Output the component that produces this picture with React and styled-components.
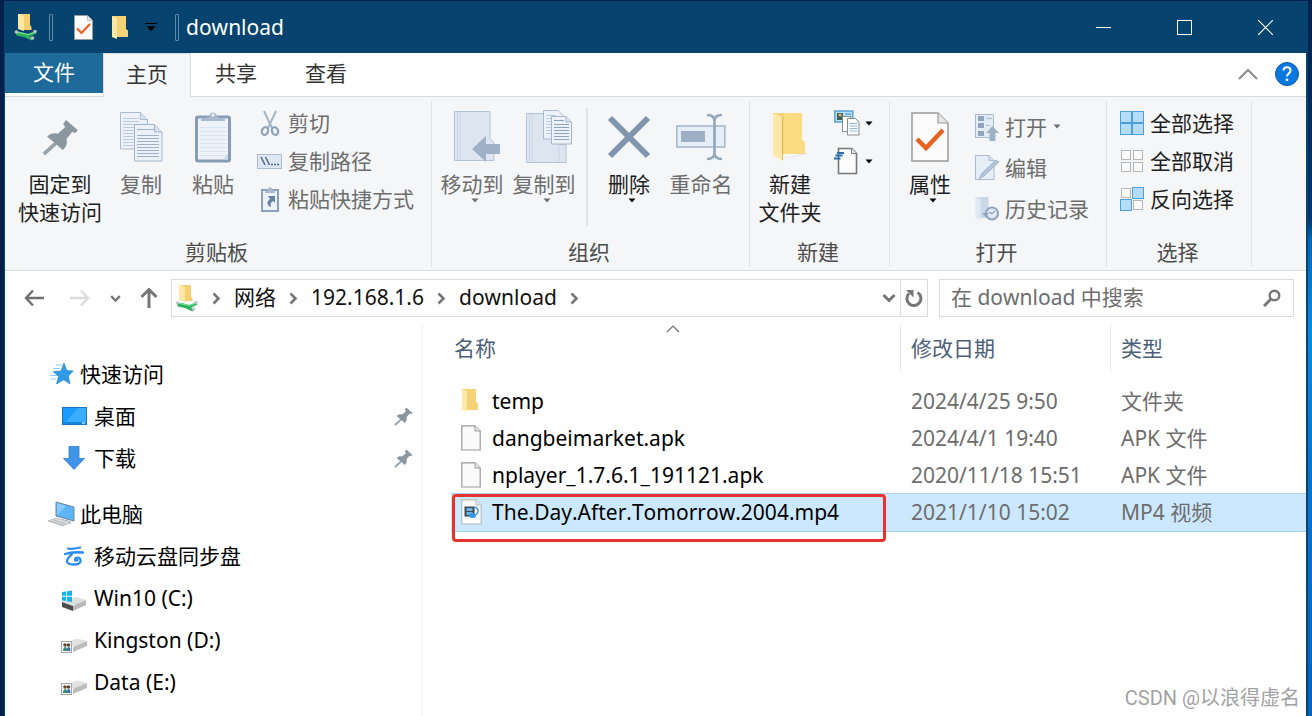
import styled, { createGlobalStyle, css } from 'styled-components'

const GlobalStyle = createGlobalStyle`
    * {
        box-sizing: border-box;
    }
    body {
        margin: 0;
        font-family: "Noto Sans", "Noto Sans CJK SC", sans-serif;
        font-size: 21px;
        font-kerning: none;
        line-height: 28px;
        color: #111;
    }
    button, input, table {
        font: inherit;
        font-kerning: inherit;
        color: inherit;
    }
    button {
        border: none;
        background: none;
        padding: 0;
        cursor: pointer;
    }
    svg {
        display: block;
        flex: none;
    }
`

const Desktop = styled.div`
    height: 100vh;
    padding: 1px 4px 0;
    display: flex;
    overflow: hidden;
    position: relative;
    background: linear-gradient(to right, #02204a 50%, transparent 50%),
        linear-gradient(to bottom, #02204a 0, #02366f 220px, #0a67b5 240px, #0a8be0 330px, #0a73cf 480px, #0863bd 100%);
`

const Window = styled.div`
    flex: 1;
    min-width: 0;
    display: flex;
    flex-direction: column;
    background: white;
    border-left: 1px solid #06446f;
    border-right: 2px solid #06446f;
`

/* title bar */

const TitleBar = styled.header`
    height: 52px;
    display: flex;
    align-items: center;
    padding-left: 9px;
    background: #06446f;
    color: white;
`

const TitleSeparator = styled.span`
    width: 4px;
    height: 27px;
    border: 1px solid #5d88a8;
    border-radius: 1px;
`

const QuickButton = styled.button`
    width: ${props => props.$width || 38}px;
    height: 36px;
    display: flex;
    align-items: center;
    justify-content: center;
`

const Title = styled.h1`
    flex: 1;
    margin: 0 0 0 7px;
    font-size: 21px;
    font-weight: normal;
    line-height: 28px;
`

const WindowButton = styled.button`
    width: 81px;
    height: 52px;
    display: flex;
    align-items: center;
    justify-content: center;
`

/* tabs */

const Tabs = styled.nav`
    height: 44px;
    display: flex;
    border-bottom: 1px solid #dadbdc;
`

const FileTab = styled.button`
    width: 98px;
    height: 40px;
    padding-bottom: 2px;
    background: #1d6a9b;
    color: white;
`

const Tab = styled.button`
    width: ${props => props.$active ? 88 : 90}px;
    height: 44px;
    padding-bottom: 4px;
    color: #333;
    ${props => props.$active && css`
        background: #f5f6f7;
        border: 1px solid #dadbdc;
        border-width: 1px 1px 0;
    `}
`

const TabTools = styled.div`
    flex: 1;
    display: flex;
    align-items: center;
    justify-content: flex-end;
    gap: 16px;
    padding: 0 6px 2px 0;
`

/* ribbon */

const Ribbon = styled.section`
    display: flex;
    padding: 4px 0 3px;
    background: #f5f6f7;
    border-bottom: 1px solid #dadbdc;
`

const Group = styled.div`
    display: flex;
    flex-direction: column;
    padding: 3px 0 1px;
    border-right: 1px solid #e2e3e4;
`

const GroupBody = styled.div`
    height: 134px;
    display: flex;
    align-items: flex-start;
    padding: 0 ${props => props.$right || 4}px 0 ${props => props.$left || 4}px;
`

const GroupLabel = styled.div`
    padding-right: 3px;
    text-align: center;
    color: #4c4c4c;
`

const BigButton = styled.button`
    width: ${props => props.$wide ? 90 : 72}px;
    padding-top: 5px;
    display: flex;
    flex-direction: column;
    align-items: center;
    white-space: nowrap;
    color: ${props => props.$disabled ? '#6d6d6d' : '#1e1e1e'};
`

const BigIcon = styled.span`
    height: 56px;
    margin-bottom: 5px;
    display: flex;
    align-items: center;
`

const BigCaret = styled.span`
    padding-left: 6px;
`

const Divider = styled.span`
    width: 2px;
    height: 118px;
    margin: 4px 5px 0 6px;
    background: #e2e3e4;
`

const Column = styled.div`
    display: flex;
    flex-direction: column;
    padding: ${props => props.$top || 0}px 0 0 8px;
`

const SmallButton = styled.button`
    height: ${props => props.$tall ? 41 : 38}px;
    display: flex;
    align-items: center;
    gap: 6px;
    white-space: nowrap;
    color: ${props => props.$disabled ? '#6d6d6d' : '#1e1e1e'};
`

const SmallIcon = styled.span`
    width: 25px;
    display: flex;
    justify-content: center;
`

/* address bar */

const AddressRow = styled.div`
    display: flex;
    align-items: center;
    padding: 8px 12px 8px 6px;
`

const NavButton = styled.button`
    width: ${props => props.$width || 46}px;
    height: 38px;
    display: flex;
    align-items: center;
    justify-content: center;
`

const AddressBox = styled.div`
    flex: 1;
    height: 38px;
    display: flex;
    align-items: center;
    padding-left: 3px;
    border: 1px solid #d9d9d9;
    margin-right: 11px;
`

const Crumb = styled.button`
    padding-bottom: 2px;
    white-space: nowrap;
`

const CrumbArrow = styled.button`
    width: 35px;
    display: flex;
    justify-content: center;
`

const Spacer = styled.span`
    flex: 1;
`

const RefreshButton = styled.button`
    width: 27px;
    height: 36px;
    display: flex;
    align-items: center;
    justify-content: center;
    border-left: 1px solid #d9d9d9;
`

const SearchBox = styled.label`
    width: 355px;
    height: 38px;
    display: flex;
    align-items: center;
    padding: 0 12px 0 11px;
    border: 1px solid #d9d9d9;
`

const SearchInput = styled.input`
    flex: 1;
    min-width: 0;
    padding: 0 0 2px;
    border: none;
    outline: none;
    background: none;
    &::placeholder {
        color: #6d6d6d;
        opacity: 1;
    }
`

/* body */

const Body = styled.div`
    flex: 1;
    min-height: 0;
    display: flex;
`

const Sidebar = styled.aside`
    width: 418px;
    padding-top: 28px;
    border-right: 2px solid #f5f5f5;
    overflow: hidden;
`

const TreeList = styled.ul`
    list-style: none;
    margin: 0 0 14px;
    padding: 0;
`

const TreeItem = styled.li`
    height: 42px;
    display: flex;
    align-items: center;
    padding: 0 8px 0 ${props => props.$child ? 55 : 43}px;
`

const TreeLink = styled.a`
    flex: 1;
    display: flex;
    align-items: center;
    gap: ${props => props.$child ? 6 : 4}px;
    color: #000;
    text-decoration: none;
`

const TreeIcon = styled.span`
    width: 28px;
    display: flex;
    justify-content: center;
`

const Content = styled.main`
    flex: 1;
    min-width: 0;
    padding-left: 28px;
`

const FileTable = styled.table`
    width: 100%;
    border-collapse: separate;
    border-spacing: 0;
    table-layout: fixed;
    text-align: left;
    tbody::before {
        content: "";
        display: block;
        height: 11px;
    }
`

const HeadCell = styled.th`
    position: relative;
    height: 46px;
    width: ${props => props.$width ? props.$width + 'px' : 'auto'};
    padding: 0 0 0 ${props => props.$first ? 3 : 10}px;
    font-weight: normal;
    color: #4c607a;
    border-right: ${props => props.$last ? 'none' : '1px solid #e5e5e5'};
`

const SortMark = styled.span`
    position: absolute;
    top: 0;
    left: 50%;
    margin-left: -10px;
`

const Row = styled.tr`
    td {
        height: 37px;
        padding: 0 0 0 10px;
        white-space: nowrap;
        color: #6d6d6d;
        ${props => props.$selected && css`
            height: 39px;
            padding-bottom: 2px;
            background: #cce8ff;
            border-top: 1px solid #a6d3ef;
            border-bottom: 1px solid #a6d3ef;
        `}
    }
`

const FileName = styled.div`
    position: relative;
    display: flex;
    align-items: center;
    gap: 10px;
    color: #000;
`

const FileIcon = styled.span`
    width: 21px;
    display: flex;
`

const Highlight = styled.span`
    position: absolute;
    top: -4px;
    left: -9px;
    right: 15px;
    height: 48px;
    border: 3px solid #e8322d;
    border-radius: 4px;
`

const Watermark = styled.span`
    position: absolute;
    right: 12px;
    bottom: 4px;
    font-family: Roboto, "Noto Sans CJK SC", sans-serif;
    font-size: 20px;
    color: #a2a2a2;
`

/* icons */

const Caret = ({ color = '#000' }) => (
    <svg width="8" height="5" viewBox="0 0 8 5">
        <path d="M0.5 0.5h7L4 4.5z" fill={color} />
    </svg>
)

const ArrowRight = () => (
    <svg width="9" height="13" viewBox="0 0 9 13">
        <path d="M1.5 1.5l5 5-5 5" fill="none" stroke="#767676" strokeWidth="2.6" />
    </svg>
)

const ChevronDown = ({ size = 14, width = 3 }) => (
    <svg width={size} height={size} viewBox="0 0 14 14">
        <path d="M1.5 4l5.5 5.5L12.5 4" fill="none" stroke="#767676" strokeWidth={width} />
    </svg>
)

const ShareFolder = () => (
    <svg width="24" height="28" viewBox="0 0 24 28">
        <path d="M4 1h12v11l1.500 2v3H6z" fill="#f5cf70" />
        <path d="M4 1h3l3 2v15l-6-2z" fill="#ffe8a6" />
        <path d="M2 18.500l5 .5 7 2 7-2.500 1.500 2-6.500 3 3 2-1.500 2-7.500-3.500-7.500-1.500z" fill="#2fb25c" />
        <path d="M3 19l11 2.500 6-2" fill="none" stroke="#7fe39c" strokeWidth="1.200" />
        <circle cx="2.500" cy="19" r="1.800" fill="#b9c5c8" />
        <circle cx="21" cy="18.500" r="1.800" fill="#b9c5c8" />
        <circle cx="18.500" cy="25" r="1.800" fill="#b9c5c8" />
    </svg>
)

const Folder = () => (
    <svg width="18" height="25" viewBox="0 0 18 25">
        <path d="M1 1h14v13l2 1.500V22H5z" fill="#f6d276" />
        <path d="M1 1l5 2.500V24l-5-2z" fill="#ffe8a8" />
    </svg>
)

const NewFolder = () => (
    <svg width="40" height="52" viewBox="0 0 40 52">
        <path d="M34 42h4l-22 6z" fill="#d9d9d9" />
        <path d="M3 2h29v27l3 2v12H12L3 44z" fill="#f7d372" />
        <path d="M14 2h18v27l3 2v12H14z" fill="#fbdc83" />
        <path d="M3 2l10 4v44L3 44z" fill="#ffe8a8" />
        <path d="M12.500 6v43" stroke="#e3b955" />
    </svg>
)

const CheckDoc = ({ w = 38, h = 50 }) => (
    <svg width={w} height={h} viewBox="0 0 38 50">
        <path d="M1 1h26l10 10v38H1z" fill="#fbfbfb" stroke="#9b9b9b" strokeWidth="1.500" />
        <path d="M27 1v10h10" fill="#e6e6e6" stroke="#9b9b9b" strokeWidth="1.200" />
        <path d="M6 27l9 9L32 18" fill="none" stroke="#e8611f" strokeWidth="4.500" />
    </svg>
)

const Pin = ({ size = 40 }) => (
    <svg width={size} height={size} viewBox="0 0 40 40">
        <path d="M26 1l12.500 11-2 3-4-1-6 7.500c1 4.500 0 8.500-4 12L5.500 19c3-3.500 8-4.500 11.500-3L25 9l-2-4z" fill="#8b979f" />
        <path d="M15 26L2 38" stroke="#98a3aa" strokeWidth="4" />
    </svg>
)

const lines = (x, w, from, to, step) => {
    let d = ''
    for (let y = from; y <= to; y += step) d += `M${x} ${y}h${w}`
    return d
}

const CopyIcon = () => (
    <svg width="43" height="50" viewBox="0 0 43 50">
        <path d="M.5.500h20l7 7V37H.5z" fill="#edf2fa" stroke="#a9bccf" />
        <path d="M20.500.500v7h7" fill="#d7e2f0" stroke="#a9bccf" />
        <path d={lines(3, 16, 6.5, 34, 3)} stroke="#bccadb" />
        <path d="M14.500 12.500h20l7.500 7.500v29H14.500z" fill="#edf2fa" stroke="#a2b6cb" />
        <path d="M34.500 12.500V20H42" fill="#d7e2f0" stroke="#a2b6cb" />
        <path d={lines(17, 17, 17.5, 20, 3) + lines(17, 22, 23.5, 46, 3)} stroke="#9fb1c6" />
    </svg>
)

const PasteIcon = () => (
    <svg width="36" height="52" viewBox="0 0 36 52">
        <rect x="1.500" y="6" width="33" height="44" rx="1.500" fill="#eef3fa" stroke="#879db5" strokeWidth="3" />
        <path d="M28 48.500l5-6v6z" fill="#cbd8e8" />
        <path d="M6 10V8l8-2c0-6 8-6 8 0l8 2v2z" fill="#a9bacc" />
        <circle cx="18" cy="4" r="1.500" fill="#f5f6f7" />
        <path d={lines(5, 26, 16.5, 45, 4)} stroke="#d8e1ed" />
    </svg>
)

const CutIcon = () => (
    <svg width="20" height="28" viewBox="0 0 20 28">
        <path d="M4 2l8 17M16 2L8 19" stroke="#a6b5c5" strokeWidth="2" />
        <ellipse cx="5" cy="22" rx="3" ry="4" fill="none" stroke="#8ba2ba" strokeWidth="2.200" transform="rotate(20 5 22)" />
        <ellipse cx="15" cy="22" rx="3" ry="4" fill="none" stroke="#8ba2ba" strokeWidth="2.200" transform="rotate(-20 15 22)" />
    </svg>
)

const PathIcon = () => (
    <svg width="25" height="15" viewBox="0 0 25 15">
        <rect x=".5" y=".5" width="24" height="14" fill="#dde7f3" stroke="#aabdd2" />
        <path d="M4 3l4 8M8.500 3l4 8" stroke="#536a85" strokeWidth="1.500" />
        <path d="M14 10.500h2M17 10.500h2M20 10.500h2" stroke="#536a85" strokeWidth="1.500" />
    </svg>
)

const ShortcutIcon = () => (
    <svg width="18" height="26" viewBox="0 0 18 26">
        <rect x="1" y="4" width="16" height="21" fill="#edf3fa" stroke="#8ba2ba" strokeWidth="2" />
        <path d="M4 5.500l3-2c0-3 4-3 4 0l3 2v1.500H4z" fill="#a9bacc" />
        <path d="M7 10h7v7l-2-2c-2 1-3 3-2 6-4-1-5-5-1-8z" fill="#6684a5" />
    </svg>
)

const MoveToIcon = () => (
    <svg width="55" height="52" viewBox="-9 0 55 52">
        <path d="M.5.500H36v27l4 4v18H.5z" fill="#dde5f0" stroke="#b4c4d6" />
        <path d="M3.500 1v48M6 1v48" stroke="#ccd8e6" />
        <path d="M18 38l14-13v8h14v10H32v8z" fill="#9fb1c6" />
    </svg>
)

const CopyToIcon = () => (
    <svg width="55" height="54" viewBox="-9 0 55 54">
        <path d="M.5 3.500H34v31h6v18H.5z" fill="#dde5f0" stroke="#b4c4d6" />
        <path d="M3.500 4v48M6 4v48M33 34v18" stroke="#ccd8e6" />
        <path d="M17.500.500H32l6 6V29H17.500z" fill="#edf2fa" stroke="#a9bccf" />
        <path d={lines(20, 10, 5.5, 26, 3)} stroke="#bccadb" />
        <path d="M25.500 6.500H40l5.500 5.500v22h-20z" fill="#edf2fa" stroke="#a2b6cb" />
        <path d="M40 6.500V12h5.500" fill="#d7e2f0" stroke="#a2b6cb" />
        <path d={lines(28, 10, 10.5, 12, 3) + lines(28, 15, 14.5, 31, 3)} stroke="#8ea4bc" />
    </svg>
)

const DeleteIcon = () => (
    <svg width="44" height="44" viewBox="0 0 44 44">
        <path d="M3 3l38 38M41 3L3 41" stroke="#8096ae" strokeWidth="6" />
    </svg>
)

const RenameIcon = () => (
    <svg width="50" height="48" viewBox="0 0 50 48">
        <rect x=".8" y="13" width="48" height="21" fill="#e6eef8" stroke="#a7bad0" strokeWidth="1.600" />
        <rect x="5" y="18" width="24" height="11" fill="#9db0c6" />
        <path d="M31 2c5 0 7.500 2 7.500 6v32c0 4-2.500 6-7.500 6M46 2c-5 0-7.500 2-7.500 6M46 46c-5 0-7.500-2-7.500-6" fill="none" stroke="#92a6bc" strokeWidth="2.600" />
    </svg>
)

const NewItemIcon = () => (
    <svg width="26" height="26" viewBox="0 0 26 26">
        <rect x=".8" y="1" width="18" height="11" fill="#b9e0f6" stroke="#58a4d4" strokeWidth="1.500" />
        <rect x="3" y="3" width="6" height="7" fill="#39624f" />
        <circle cx="6" cy="5" r="1.500" fill="#e6b48a" />
        <path d="M11 4h6M11 6.500h6" stroke="#3b85b8" />
        <path d="M8.500 6.500h7l3 3v12h-10z" fill="#fff" stroke="#8b8b8b" />
        <path d="M13.500 8.500h8l3.500 3.500v13H13.500z" fill="#fff" stroke="#8b8b8b" />
        <path d={lines(15.5, 8, 13.5, 23, 2.5)} stroke="#8fb4dc" />
    </svg>
)

const EasyAccessIcon = () => (
    <svg width="26" height="28" viewBox="0 0 26 28">
        <path d="M4.500 1.500h13l5 5v20h-18z" fill="#fdfdfd" stroke="#777" strokeWidth="1.600" />
        <path d="M17.500 1.500v5h5" fill="#eee" stroke="#777" />
        <path d="M3 6h7M1.500 8.500h7M0 11.500h6.500" stroke="#2b6fae" strokeWidth="1.800" />
    </svg>
)

const OpenIcon = () => (
    <svg width="24" height="28" viewBox="0 0 24 28">
        <rect x=".5" y="1.500" width="18" height="23" fill="#e3ebf5" stroke="#a9bccf" />
        <path d="M3 3h6v5H3zM3 10h6v5H3zM3 18h6v5H3z" fill="#8fa5bd" />
        <path d="M11 5.500h6M11 12.500h4" stroke="#a9bccf" />
        <path d="M17.500 13l6.500 7h-3.500v8h-6v-8H11z" fill="#9fb1c6" />
    </svg>
)

const EditIcon = () => (
    <svg width="24" height="26" viewBox="0 0 24 26">
        <path d="M.5.500H14l5 5v19H.5z" fill="#e6eef8" stroke="#a9bccf" />
        <path d="M14 .5v5h5" fill="#d0dcea" stroke="#a9bccf" />
        <path d="M4 24l3-6L21 5l3 2L9 21z" fill="#b3c4d8" stroke="#8fa5bd" strokeWidth=".6" />
    </svg>
)

const HistoryIcon = () => (
    <svg width="24" height="26" viewBox="0 0 24 26">
        <path d="M.5 1h13v13l2 2v6H5z" fill="#cbd8e8" />
        <path d="M.5 1l5 2.500V24l-5-2z" fill="#dfe8f3" />
        <circle cx="17" cy="17.500" r="6" fill="#dfe8f3" stroke="#8fa5bd" strokeWidth="2" />
        <path d="M17 17.500l3-2.500M17 17.500l-3-1" stroke="#7389a2" />
        <path d="M7 17h7l-3.500 4z" fill="#8fa5bd" />
    </svg>
)

const cells = [[0, 0], [12, 0], [0, 12], [12, 12]]

const SelectIcon = ({ on }) => (
    <svg width="24" height="24" viewBox="0 0 24 24">
        {cells.map(([x, y], i) => (
            <rect
                key={i}
                x={x + (on[i] ? 0.5 : 1.5)}
                y={y + (on[i] ? 0.5 : 1.5)}
                width={on[i] ? 11 : 9}
                height={on[i] ? 11 : 9}
                fill={on[i] ? '#b5dcfb' : '#fafafa'}
                stroke={on[i] ? '#4a9fdc' : '#b5b5b5'}
            />
        ))}
    </svg>
)

const QuickStar = () => (
    <svg width="26" height="22" viewBox="0 0 26 22">
        <path d="M15 0l2.800 7.500 6.500.5-5 5 1.800 8-6.300-4.200L7.500 21l2-7.700L4 8.500l8-.6z" fill="#2f9ae6" stroke="#1a7cc8" strokeWidth=".6" />
        <path d="M7 2h6M4 5.500h7M1 12.500h7M2 16h5" stroke="#8ccbf7" strokeWidth="1" />
    </svg>
)

const DesktopIcon = () => (
    <svg width="25" height="18" viewBox="0 0 25 18">
        <rect x=".5" y=".5" width="24" height="17" fill="#189bfb" stroke="#1577c4" />
        <path d="M16 1h8v14H4z" fill="#39adff" />
        <path d="M1 16h23" stroke="#0c6fc0" />
        <path d="M20 16h3" stroke="#fff" />
    </svg>
)

const DownloadIcon = () => (
    <svg width="24" height="24" viewBox="0 0 24 24">
        <path d="M7 .5h10v12h5.500L12 23.500 1.500 12.500H7z" fill="#3f95ea" stroke="#2f80d4" strokeWidth=".8" />
    </svg>
)

const ComputerIcon = () => (
    <svg width="28" height="26" viewBox="0 0 28 26">
        <path d="M8 1l18 5v14L8 15z" fill="#5bb5f7" stroke="#6c8495" />
        <path d="M9 2l9 3-9 9z" fill="#8accfb" />
        <path d="M14 18l7 2 2 3-6-2z" fill="#9aa3aa" />
        <path d="M0 20l8-3 15 4-8 4z" fill="#dadddf" stroke="#a9aeb2" strokeWidth=".7" />
        <path d="M3 20l12 4M6 19l12 4" stroke="#a9aeb2" strokeWidth=".7" />
    </svg>
)

const CloudDiskIcon = () => (
    <svg width="20" height="20" viewBox="0 0 20 20">
        <path d="M4 2.500c4 1 8 0 12-1M1 8c6-2 12-2 18-1.500M8 8c-2 2-5 4-5 7.500 0 3 5 3 8 3 4 0 6-2 5.500-4.500-.5-3-5-3-5.500-.5 0 1.500 2 1.500 2.500.5" fill="none" stroke="#2a8bf2" strokeWidth="2.300" strokeLinecap="round" />
    </svg>
)

const DriveShape = () => (
    <>
        <path d="M1 13l14-5 10 3-13 6z" fill="#dedede" />
        <path d="M12 17l13-6v5l-13 6z" fill="#b9b9b9" />
        <path d="M1 13l11 4v5L1 18z" fill="#4d4d4d" />
    </>
)

const SystemDrive = () => (
    <svg width="26" height="27" viewBox="0 -4 26 27">
        <DriveShape />
        <path d="M1 3l4-.6v4.300H1zM6 2.200L11 1.500v5.200H6zM1 7.700h4V12l-4-.6zM6 7.700h5v5.200l-5-.7z" fill="#12b3ee" />
    </svg>
)

const SharedDrive = () => (
    <svg width="28" height="27" viewBox="0 -4 28 27">
        <path d="M9 11l8-3.500 10 2.500-12 6-4-1z" fill="#e2e2e2" />
        <path d="M13 16l14-6v5l-14 6z" fill="#bdbdbd" />
        <rect x="1.500" y="10.500" width="10" height="11" fill="#fafafa" stroke="#a6a6a6" />
        <circle cx="5" cy="14" r="1.800" fill="#6b4a33" />
        <circle cx="8.500" cy="14" r="1.800" fill="#5a4634" />
        <path d="M3 20c0-5 4-5 4-1v1z" fill="#3c8f6a" />
        <path d="M6.500 20c0-5 4-5 4-1v1z" fill="#3c76b8" />
    </svg>
)

const BlankFile = () => (
    <svg width="20" height="26" viewBox="0 0 20 26">
        <path d="M.8.800H14l5.200 5.200v19H.8z" fill="#fafafa" stroke="#9a9a9a" strokeWidth="1.200" />
        <path d="M14 .8V6h5.200" fill="#e9e9e9" stroke="#9a9a9a" />
    </svg>
)

const VideoFile = () => (
    <svg width="21" height="26" viewBox="0 0 21 26">
        <path d="M.8.800H15l5.200 5.200v19H.8z" fill="#fdfdfd" stroke="#b4bcc2" strokeWidth="1.200" />
        <path d="M15 .8V6h5.200" fill="#e4e7ea" stroke="#b4bcc2" />
        <rect x="3.500" y="7.500" width="10" height="10" fill="#3d4c58" />
        <path d="M5.500 9h6v3h-6zM5.500 13h6v3h-6z" fill="#6fb3d8" />
        <path d="M13 8c5 1 5 5 2 8" fill="none" stroke="#4a9bd6" strokeWidth="1.600" />
        <ellipse cx="11.500" cy="16.500" rx="3.500" ry="2.500" fill="#2e9be6" />
    </svg>
)

const quickAccess = [
    { name: '桌面', icon: <DesktopIcon /> },
    { name: '下载', icon: <DownloadIcon /> },
]

const drives = [
    { name: '移动云盘同步盘', icon: <CloudDiskIcon /> },
    { name: 'Win10 (C:)', icon: <SystemDrive /> },
    { name: 'Kingston (D:)', icon: <SharedDrive /> },
    { name: 'Data (E:)', icon: <SharedDrive /> },
]

const files = [
    { name: 'temp', date: '2024/4/25 9:50', type: '文件夹', icon: <Folder /> },
    { name: 'dangbeimarket.apk', date: '2024/4/1 19:40', type: 'APK 文件', icon: <BlankFile /> },
    { name: 'nplayer_1.7.6.1_191121.apk', date: '2020/11/18 15:51', type: 'APK 文件', icon: <BlankFile /> },
    { name: 'The.Day.After.Tomorrow.2004.mp4', date: '2021/1/10 15:02', type: 'MP4 视频', icon: <VideoFile />, selected: true },
]

const Big = ({ icon, children, caret, disabled, wide }) => (
    <BigButton $disabled={disabled} $wide={wide}>
        <BigIcon>{icon}</BigIcon>
        {children}
        {caret && <BigCaret><Caret color={disabled ? '#6d6d6d' : '#000'} /></BigCaret>}
    </BigButton>
)

const Small = ({ icon, children, caret, disabled, tall, label }) => (
    <SmallButton $disabled={disabled} $tall={tall} aria-label={label}>
        <SmallIcon>{icon}</SmallIcon>
        {children}
        {caret && <Caret color={disabled ? '#6d6d6d' : '#000'} />}
    </SmallButton>
)

const TreeNode = ({ icon, name, child, pinned }) => (
    <TreeItem $child={child}>
        <TreeLink href="#" $child={child}>
            <TreeIcon>{icon}</TreeIcon>
            {name}
        </TreeLink>
        {pinned && <Pin size={19} />}
    </TreeItem>
)

const App = () => {
    return (
        <>
            <GlobalStyle />
            <Desktop>
                <Window>
                    <TitleBar>
                        <ShareFolder />
                        <QuickButton as="span" $width={11} />
                        <TitleSeparator />
                        <QuickButton $width={60} aria-label="属性"><CheckDoc w={19} h={25} /></QuickButton>
                        <QuickButton $width={14} aria-label="新建文件夹"><Folder /></QuickButton>
                        <QuickButton $width={48} aria-label="自定义">
                            <svg width="12" height="9" viewBox="0 0 12 9">
                                <path d="M0 .5h12" stroke="#000" />
                                <path d="M1.500 3h9L6 8.500z" fill="#000" />
                            </svg>
                        </QuickButton>
                        <TitleSeparator />
                        <Title>download</Title>
                        <WindowButton aria-label="最小化">
                            <svg width="15" height="15" viewBox="0 0 15 15"><path d="M0 7.500h15" stroke="#fff" /></svg>
                        </WindowButton>
                        <WindowButton aria-label="最大化">
                            <svg width="15" height="15" viewBox="0 0 15 15"><rect x=".5" y=".5" width="14" height="14" fill="none" stroke="#fff" /></svg>
                        </WindowButton>
                        <WindowButton aria-label="关闭">
                            <svg width="15" height="15" viewBox="0 0 15 15"><path d="M0 0l15 15M15 0L0 15" stroke="#fff" strokeWidth="1.200" /></svg>
                        </WindowButton>
                    </TitleBar>

                    <Tabs>
                        <FileTab>文件</FileTab>
                        <Tab $active>主页</Tab>
                        <Tab>共享</Tab>
                        <Tab>查看</Tab>
                        <TabTools>
                            <button aria-label="最小化功能区">
                                <svg width="20" height="12" viewBox="0 0 20 12"><path d="M1 11l9-9 9 9" fill="none" stroke="#8a8a8a" strokeWidth="2" /></svg>
                            </button>
                            <button aria-label="帮助">
                                <svg width="26" height="26" viewBox="0 0 26 26">
                                    <circle cx="13" cy="13" r="11.500" fill="#0a78dc" stroke="#0a5cab" />
                                    <path d="M9.500 9.500c0-4.500 7-4.500 7 0 0 3-3.500 3-3.500 6" fill="none" stroke="#fff" strokeWidth="2" />
                                    <circle cx="13" cy="18.800" r="1.400" fill="#fff" />
                                </svg>
                            </button>
                        </TabTools>
                    </Tabs>

                    <Ribbon>
                        <Group>
                            <GroupBody $left={10} $right={17}>
                                <Big wide icon={<Pin size={37} />}>固定到<br />快速访问</Big>
                                <Big disabled icon={<CopyIcon />}>复制</Big>
                                <Big disabled icon={<PasteIcon />}>粘贴</Big>
                                <Column>
                                    <Small disabled icon={<CutIcon />}>剪切</Small>
                                    <Small disabled icon={<PathIcon />}>复制路径</Small>
                                    <Small disabled icon={<ShortcutIcon />}>粘贴快捷方式</Small>
                                </Column>
                            </GroupBody>
                            <GroupLabel>剪贴板</GroupLabel>
                        </Group>
                        <Group>
                            <GroupBody $right={12}>
                                <Big disabled caret icon={<MoveToIcon />}>移动到</Big>
                                <Big disabled caret icon={<CopyToIcon />}>复制到</Big>
                                <Divider />
                                <Big caret icon={<DeleteIcon />}>删除</Big>
                                <Big disabled icon={<RenameIcon />}>重命名</Big>
                            </GroupBody>
                            <GroupLabel>组织</GroupLabel>
                        </Group>
                        <Group>
                            <GroupBody $right={16}>
                                <Big icon={<NewFolder />}>新建<br />文件夹</Big>
                                <Column>
                                    <Small caret label="新建项目" icon={<NewItemIcon />} />
                                    <Small caret label="轻松访问" icon={<EasyAccessIcon />} />
                                </Column>
                            </GroupBody>
                            <GroupLabel>新建</GroupLabel>
                        </Group>
                        <Group>
                            <GroupBody $right={17}>
                                <Big caret icon={<CheckDoc />}>属性</Big>
                                <Column $top={2}>
                                    <Small disabled caret tall icon={<OpenIcon />}>打开</Small>
                                    <Small disabled tall icon={<EditIcon />}>编辑</Small>
                                    <Small disabled tall icon={<HistoryIcon />}>历史记录</Small>
                                </Column>
                            </GroupBody>
                            <GroupLabel>打开</GroupLabel>
                        </Group>
                        <Group>
                            <GroupBody $right={17}>
                                <Column>
                                    <Small icon={<SelectIcon on={[1, 1, 1, 1]} />}>全部选择</Small>
                                    <Small icon={<SelectIcon on={[0, 0, 0, 0]} />}>全部取消</Small>
                                    <Small icon={<SelectIcon on={[0, 1, 1, 0]} />}>反向选择</Small>
                                </Column>
                            </GroupBody>
                            <GroupLabel>选择</GroupLabel>
                        </Group>
                    </Ribbon>

                    <AddressRow>
                        <NavButton aria-label="后退">
                            <svg width="20" height="18" viewBox="0 0 20 18"><path d="M9 1.500L2 9l7 7.500M2 9h18" fill="none" stroke="#6f6f6f" strokeWidth="2.400" /></svg>
                        </NavButton>
                        <NavButton aria-label="前进">
                            <svg width="20" height="18" viewBox="0 0 20 18"><path d="M11 1.500L18 9l-7 7.500M18 9H0" fill="none" stroke="#dcdcdc" strokeWidth="2.400" /></svg>
                        </NavButton>
                        <NavButton $width={24} aria-label="最近位置"><ChevronDown size={11} /></NavButton>
                        <NavButton $width={44} aria-label="上移">
                            <svg width="18" height="20" viewBox="0 0 18 20"><path d="M1.500 9L9 1.500 16.500 9M9 2v18" fill="none" stroke="#767676" strokeWidth="3" /></svg>
                        </NavButton>
                        <AddressBox>
                            <ShareFolder />
                            <CrumbArrow aria-label="展开"><ArrowRight /></CrumbArrow>
                            <Crumb>网络</Crumb>
                            <CrumbArrow aria-label="展开"><ArrowRight /></CrumbArrow>
                            <Crumb>192.168.1.6</Crumb>
                            <CrumbArrow aria-label="展开"><ArrowRight /></CrumbArrow>
                            <Crumb>download</Crumb>
                            <CrumbArrow aria-label="展开"><ArrowRight /></CrumbArrow>
                            <Spacer />
                            <NavButton $width={22} aria-label="历史"><ChevronDown /></NavButton>
                            <RefreshButton aria-label="刷新">
                                <svg width="18" height="18" viewBox="0 0 18 18">
                                    <path d="M12.500 3.500A7 7 0 1 1 4 4.500" fill="none" stroke="#767676" strokeWidth="3" />
                                    <path d="M1 1h7.500v7.500z" fill="#767676" />
                                </svg>
                            </RefreshButton>
                        </AddressBox>
                        <SearchBox>
                            <SearchInput type="text" placeholder="在 download 中搜索" aria-label="在 download 中搜索" />
                            <svg width="18" height="18" viewBox="0 0 18 18">
                                <circle cx="11.500" cy="6.500" r="4.800" fill="none" stroke="#767676" strokeWidth="2.400" />
                                <path d="M8 10l-7 7" stroke="#767676" strokeWidth="3" />
                            </svg>
                        </SearchBox>
                    </AddressRow>

                    <Body>
                        <Sidebar>
                            <TreeList>
                                <TreeNode icon={<QuickStar />} name="快速访问" />
                                {quickAccess.map(item => <TreeNode key={item.name} child pinned {...item} />)}
                            </TreeList>
                            <TreeList>
                                <TreeNode icon={<ComputerIcon />} name="此电脑" />
                                {drives.map(item => <TreeNode key={item.name} child {...item} />)}
                            </TreeList>
                        </Sidebar>
                        <Content>
                            <FileTable>
                                <thead>
                                    <tr>
                                        <HeadCell $first $width={450}>
                                            名称
                                            <SortMark>
                                                <svg width="14" height="8" viewBox="0 0 14 8"><path d="M1 7l6-6 6 6" fill="none" stroke="#6d6d6d" strokeWidth="1.200" /></svg>
                                            </SortMark>
                                        </HeadCell>
                                        <HeadCell $width={210}>修改日期</HeadCell>
                                        <HeadCell $last>类型</HeadCell>
                                    </tr>
                                </thead>
                                <tbody>
                                    {files.map(file => (
                                        <Row key={file.name} $selected={file.selected}>
                                            <td>
                                                <FileName>
                                                    <FileIcon>{file.icon}</FileIcon>
                                                    {file.name}
                                                    {file.selected && <Highlight />}
                                                </FileName>
                                            </td>
                                            <td>{file.date}</td>
                                            <td>{file.type}</td>
                                        </Row>
                                    ))}
                                </tbody>
                            </FileTable>
                        </Content>
                    </Body>
                </Window>
                <Watermark>CSDN @以浪得虚名</Watermark>
            </Desktop>
        </>
    )
}

export default App
